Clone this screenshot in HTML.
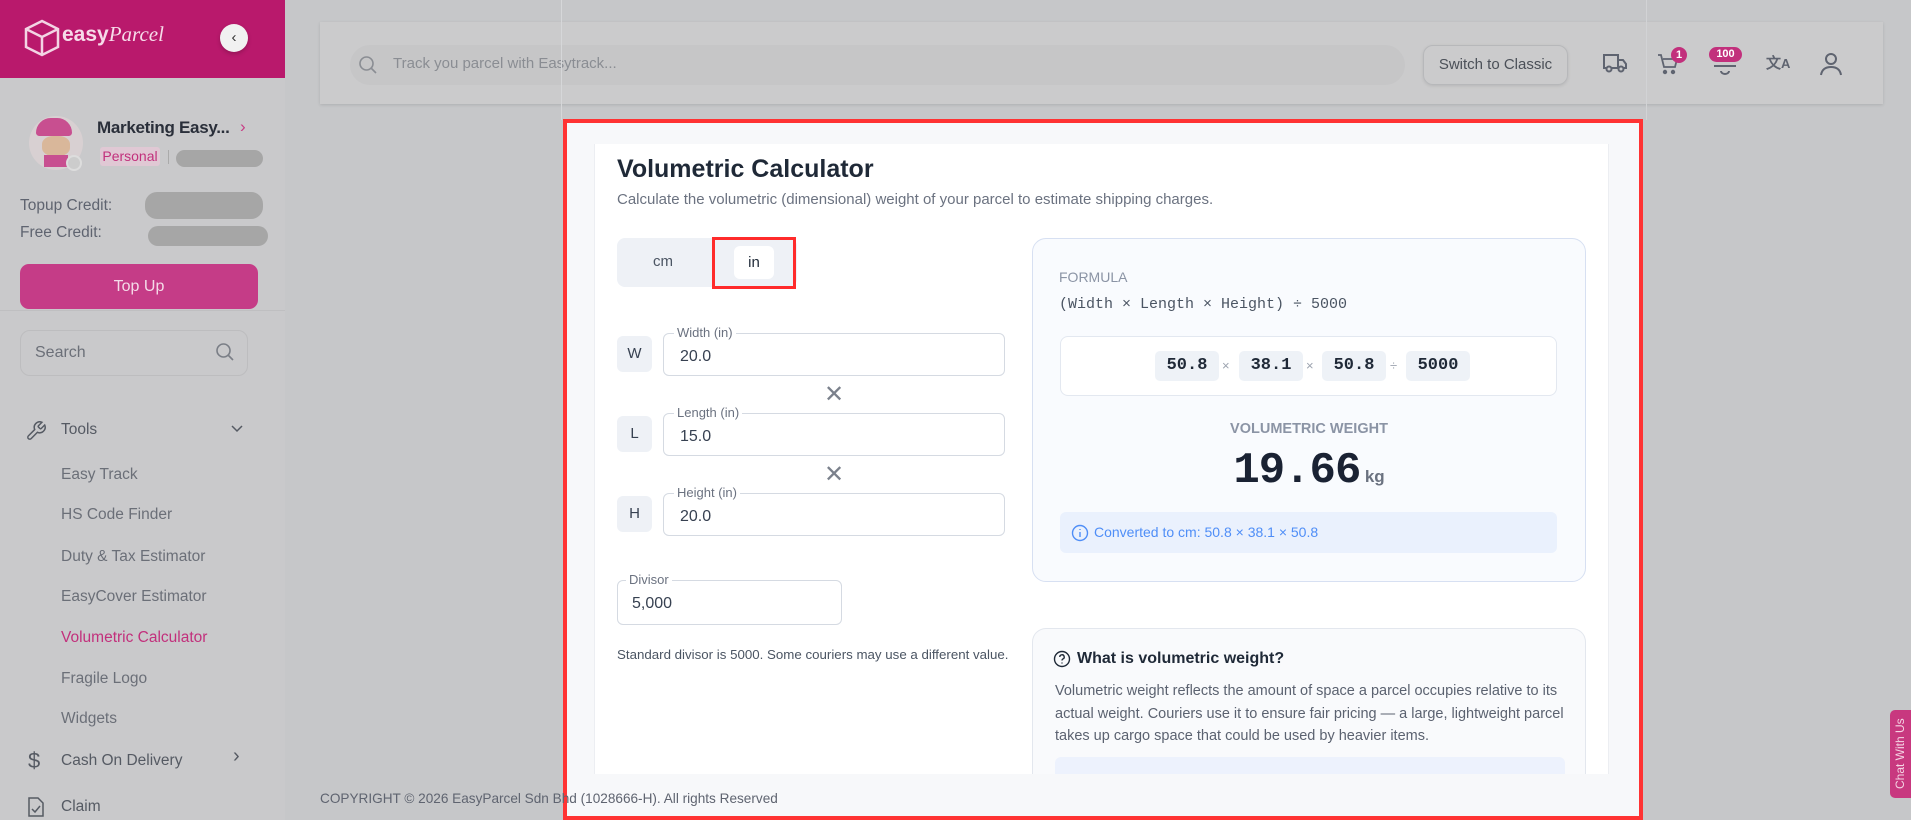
<!DOCTYPE html>
<html><head><meta charset="utf-8">
<style>
*{box-sizing:border-box;margin:0;padding:0}
body{width:1911px;height:820px;overflow:hidden;position:relative;font-family:"Liberation Sans",sans-serif;background:#c6c7c9;color:#374151}
.a{position:absolute}
.side{left:0;top:0;width:285px;height:820px;background:#c9c9cb}
.ph{left:0;top:0;width:285px;height:78px;background:#b9196c}
.mi{position:absolute;left:61px;font-size:15.5px;color:#6b6f78}
.mono{font-family:"Liberation Mono","DejaVu Sans Mono",monospace}
.fl{position:absolute;font-size:13px;color:#6b7280;background:#fff;padding:0 3px;top:-9px;left:10px;line-height:16px}
.inp{position:absolute;border:1px solid #d5dae2;border-radius:6px;background:#fff;font-size:16px;color:#374151}
.lb{position:absolute;left:617px;width:35px;height:36px;background:#eef1f6;border-radius:6px;font-size:15px;text-align:center;line-height:36px;color:#374151}
.chip{position:absolute;top:351px;height:30px;width:64px;background:#eef2f7;border-radius:5px;font-weight:bold;font-size:17px;color:#1f2937;text-align:center;line-height:30px}
.op{position:absolute;top:358px;font-size:13px;color:#9ca3af}
</style></head><body>
<!-- sidebar -->
<div class="a side"></div>
<div class="a ph"></div>
<svg class="a" style="left:22px;top:18px" width="40" height="40" viewBox="0 0 40 40" fill="none" stroke="#f3d4e4" stroke-width="2.5"><path d="M20 3 L36 11 V29 L20 37 L4 29 V11 Z M4 11 L20 19 L36 11 M20 19 V37"/></svg>
<div class="a" style="left:62px;top:22px;font-size:21px;font-weight:bold;color:#f6dbe9">easy<span style="font-family:'Liberation Serif',serif;font-style:italic;font-weight:normal;font-size:21px">Parcel</span></div>
<div class="a" style="left:220px;top:24px;width:28px;height:28px;border-radius:50%;background:#f1f1f1;box-shadow:0 2px 4px rgba(0,0,0,.2);text-align:center;line-height:27px;font-size:15px;color:#333">‹</div>
<div class="a" style="left:29px;top:116px;width:54px;height:54px;border-radius:50%;background:#d8d0d2"></div>
<div class="a" style="left:36px;top:118px;width:36px;height:18px;border-radius:18px 18px 4px 4px;background:#c84f90"></div>
<div class="a" style="left:42px;top:136px;width:28px;height:20px;border-radius:40%;background:#d9b79a"></div>
<div class="a" style="left:44px;top:155px;width:24px;height:12px;background:#c84f90"></div>
<div class="a" style="left:66px;top:155px;width:16px;height:16px;border-radius:50%;background:#ccc;border:2px solid #ddd"></div>
<div class="a" style="left:97px;top:118px;font-size:17px;font-weight:bold;color:#2a2f3a;letter-spacing:-0.3px">Marketing Easy...</div>
<div class="a" style="left:240px;top:117px;font-size:17px;color:#c73d85">›</div>
<div class="a" style="left:100px;top:147px;width:60px;height:19px;background:#e0c8d4;color:#c2307c;font-size:14px;text-align:center;line-height:19px;border-radius:3px">Personal</div>
<div class="a" style="left:168px;top:150px;width:1px;height:14px;background:#aaa"></div>
<div class="a" style="left:176px;top:150px;width:87px;height:17px;background:#a6a6a6;border-radius:9px"></div>
<div class="a" style="left:20px;top:197px;font-size:15.5px;color:#5f6470">Topup Credit:</div>
<div class="a" style="left:20px;top:224px;font-size:15.5px;color:#5f6470">Free Credit:</div>
<div class="a" style="left:145px;top:192px;width:118px;height:27px;background:#a6a6a6;border-radius:12px"></div>
<div class="a" style="left:148px;top:226px;width:120px;height:20px;background:#a6a6a6;border-radius:10px"></div>
<div class="a" style="left:20px;top:264px;width:238px;height:45px;background:#c53c87;border-radius:9px;color:#f4dbe8;font-size:16px;text-align:center;line-height:45px">Top Up</div>
<div class="a" style="left:0;top:310px;width:285px;height:1px;background:#bfbfc1"></div>
<div class="a" style="left:20px;top:330px;width:228px;height:46px;border:1px solid #bdbdbf;border-radius:10px;font-size:16px;color:#6b6f78;line-height:44px;padding-left:14px">Search</div>
<svg class="a" style="left:215px;top:342px" width="20" height="20" viewBox="0 0 20 20" fill="none" stroke="#7a7e86" stroke-width="1.6"><circle cx="8.5" cy="8.5" r="6.5"/><path d="M13.5 13.5 L18 18"/></svg>
<svg class="a" style="left:25px;top:420px" width="22" height="22" viewBox="0 0 24 24" fill="none" stroke="#555a63" stroke-width="1.6"><path d="M14.7 6.3a1 1 0 0 0 0 1.4l1.6 1.6a1 1 0 0 0 1.4 0l3.8-3.8a6 6 0 0 1-7.9 7.9l-6.9 6.9a2.1 2.1 0 0 1-3-3l6.9-6.9a6 6 0 0 1 7.9-7.9z"/></svg>
<div class="mi" style="top:421px;color:#555a63">Tools</div>
<svg class="a" style="left:230px;top:424px" width="14" height="10" viewBox="0 0 14 10" fill="none" stroke="#555a63" stroke-width="1.5"><path d="M2 2 L7 7 L12 2"/></svg>
<div class="mi" style="top:466px">Easy Track</div>
<div class="mi" style="top:506px">HS Code Finder</div>
<div class="mi" style="top:548px">Duty &amp; Tax Estimator</div>
<div class="mi" style="top:588px">EasyCover Estimator</div>
<div class="mi" style="top:629px;color:#c2307c">Volumetric Calculator</div>
<div class="mi" style="top:670px">Fragile Logo</div>
<div class="mi" style="top:710px">Widgets</div>
<div class="a" style="left:28px;top:748px;font-size:22px;color:#555a63">$</div>
<div class="mi" style="top:752px;color:#555a63">Cash On Delivery</div>
<div class="a" style="left:233px;top:745px;font-size:20px;color:#555a63">›</div>
<svg class="a" style="left:27px;top:796px" width="18" height="22" viewBox="0 0 18 22" fill="none" stroke="#555a63" stroke-width="1.5"><path d="M2 2h9l5 5v13H2z M5 13l3 3 5-6"/></svg>
<div class="mi" style="top:798px;color:#555a63">Claim</div>

<!-- top bar -->
<div class="a" style="left:320px;top:22px;width:1563px;height:82px;background:#cbcbcc;box-shadow:0 1px 3px rgba(0,0,0,.12)"></div>
<div class="a" style="left:350px;top:45px;width:1055px;height:40px;background:#c6c6c7;border-radius:20px"></div>
<svg class="a" style="left:358px;top:55px" width="20" height="20" viewBox="0 0 20 20" fill="none" stroke="#8a8d93" stroke-width="1.6"><circle cx="8.5" cy="8.5" r="6.5"/><path d="M13.5 13.5 L18 18"/></svg>
<div class="a" style="left:393px;top:55px;font-size:15px;color:#8a8d93">Track you parcel with Easytrack...</div>
<div class="a" style="left:1423px;top:45px;width:145px;height:40px;border:1px solid #b7b8ba;border-radius:10px;font-size:15px;color:#4b5058;text-align:center;line-height:38px;box-shadow:0 1px 3px rgba(0,0,0,.1)">Switch to Classic</div>
<svg class="a" style="left:1602px;top:52px" width="26" height="22" viewBox="0 0 26 22" fill="none" stroke="#5f6470" stroke-width="2"><path d="M2 3h14v13H2z M16 8h5l3 4v4h-8"/><circle cx="7" cy="17" r="2.5" fill="#cbcbcc"/><circle cx="19" cy="17" r="2.5" fill="#cbcbcc"/></svg>
<svg class="a" style="left:1656px;top:52px" width="24" height="24" viewBox="0 0 24 24" fill="none" stroke="#5f6470" stroke-width="1.8"><path d="M2 3h3l3 12h11l2-8H7"/><circle cx="9" cy="20" r="1.3" fill="#5f6470"/><circle cx="17" cy="20" r="1.3" fill="#5f6470"/></svg>
<div class="a" style="left:1671px;top:47px;width:16px;height:16px;border-radius:50%;background:#c2307c;color:#fff;font-size:11px;font-weight:bold;text-align:center;line-height:16px">1</div>
<svg class="a" style="left:1712px;top:60px" width="26" height="16" viewBox="0 0 26 16" fill="none" stroke="#5f6470" stroke-width="2"><path d="M2 6h22 M9 11a4 3 0 0 0 8 0"/></svg>
<div class="a" style="left:1709px;top:47px;width:33px;height:15px;border-radius:8px;background:#c2307c;color:#fff;font-size:11px;font-weight:bold;text-align:center;line-height:15px">100</div>
<div class="a" style="left:1766px;top:52px;font-size:15px;color:#5f6470;font-weight:bold">文<span style="font-size:13px">A</span></div>
<svg class="a" style="left:1818px;top:51px" width="26" height="26" viewBox="0 0 26 26" fill="none" stroke="#5f6470" stroke-width="2"><circle cx="13" cy="8" r="5"/><path d="M3 24c1-6 5-8 10-8s9 2 10 8"/></svg>

<div class="a" style="left:561px;top:0;width:1px;height:120px;background:#d6d7d9"></div>
<div class="a" style="left:1646px;top:0;width:1px;height:120px;background:#d2d3d5"></div>

<!-- highlight box -->
<div class="a" style="left:563px;top:119px;width:1080px;height:701px;background:#f7f8fa;border:4px solid #ff3333"></div>
<div class="a" style="left:594px;top:144px;width:1015px;height:630px;background:#fff;border-left:1px solid #eceef2;border-right:1px solid #eceef2"></div>

<div class="a" style="left:617px;top:155px;font-size:25px;font-weight:bold;color:#1f2937">Volumetric Calculator</div>
<div class="a" style="left:617px;top:191px;font-size:15px;color:#6b7280">Calculate the volumetric (dimensional) weight of your parcel to estimate shipping charges.</div>

<div class="a" style="left:617px;top:238px;width:180px;height:49px;background:#eef1f6;border-radius:8px"></div>
<div class="a" style="left:653px;top:253px;font-size:15px;color:#4b5563">cm</div>
<div class="a" style="left:734px;top:246px;width:40px;height:33px;background:#fff;border-radius:6px;font-size:15px;color:#1f2937;text-align:center;line-height:33px">in</div>
<div class="a" style="left:712px;top:237px;width:84px;height:52px;border:3px solid #ff2b2b"></div>

<div class="lb" style="top:336px">W</div>
<div class="inp" style="left:663px;top:333px;width:342px;height:43px;padding:14px 0 0 16px">20.0<span class="fl">Width (in)</span></div>
<div class="a" style="left:824px;top:380px;font-size:24px;color:#7b818c;font-weight:300">✕</div>
<div class="lb" style="top:416px">L</div>
<div class="inp" style="left:663px;top:413px;width:342px;height:43px;padding:14px 0 0 16px">15.0<span class="fl">Length (in)</span></div>
<div class="a" style="left:824px;top:460px;font-size:24px;color:#7b818c">✕</div>
<div class="lb" style="top:496px">H</div>
<div class="inp" style="left:663px;top:493px;width:342px;height:43px;padding:14px 0 0 16px">20.0<span class="fl">Height (in)</span></div>

<div class="inp" style="left:617px;top:580px;width:225px;height:45px;padding:14px 0 0 14px">5,000<span class="fl" style="left:8px">Divisor</span></div>
<div class="a" style="left:617px;top:647px;font-size:13.3px;color:#4b5563">Standard divisor is 5000. Some couriers may use a different value.</div>

<!-- formula panel -->
<div class="a" style="left:1032px;top:238px;width:554px;height:344px;background:#f9fbfe;border:1px solid #d7e0f2;border-radius:14px"></div>
<div class="a" style="left:1059px;top:269px;font-size:14px;color:#8b94a5">FORMULA</div>
<div class="a mono" style="left:1059px;top:296px;font-size:15px;color:#4b5563">(Width × Length × Height) ÷ 5000</div>
<div class="a" style="left:1060px;top:336px;width:497px;height:60px;background:#fff;border:1px solid #e3e8f0;border-radius:8px"></div>
<div class="chip mono" style="left:1155px">50.8</div>
<div class="op" style="left:1222px">×</div>
<div class="chip mono" style="left:1239px">38.1</div>
<div class="op" style="left:1306px">×</div>
<div class="chip mono" style="left:1322px">50.8</div>
<div class="op" style="left:1390px">÷</div>
<div class="chip mono" style="left:1406px">5000</div>
<div class="a" style="left:1032px;top:421px;width:554px;text-align:center;font-size:14.5px;color:#8b94a5;font-weight:bold">VOLUMETRIC WEIGHT</div>
<div class="a" style="left:1032px;top:446px;width:554px;text-align:center;color:#1a2233"><span class="mono" style="font-size:44px;font-weight:bold;letter-spacing:-1px">19.66</span> <span style="font-size:17px;font-weight:bold;color:#6b7280">kg</span></div>
<div class="a" style="left:1060px;top:512px;width:497px;height:41px;background:#eaf1fd;border-radius:6px"></div>
<svg class="a" style="left:1071px;top:524px" width="18" height="18" viewBox="0 0 18 18" fill="none" stroke="#4f8ef7" stroke-width="1.4"><circle cx="9" cy="9" r="7.5"/><path d="M9 8v5 M9 5v1"/></svg>
<div class="a" style="left:1094px;top:524px;font-size:14px;color:#4f8ef7">Converted to cm: 50.8 × 38.1 × 50.8</div>

<!-- info panel -->
<div class="a" style="left:1032px;top:628px;width:554px;height:146px;background:#f9fafc;border:1px solid #e3e7ee;border-bottom:none;border-radius:14px 14px 0 0;overflow:hidden">
<div style="position:absolute;left:22px;top:128px;width:510px;height:30px;background:#edf2fd;border-radius:6px"></div>
</div>
<svg class="a" style="left:1053px;top:650px" width="18" height="18" viewBox="0 0 18 18" fill="none" stroke="#1f2937" stroke-width="1.4"><circle cx="9" cy="9" r="7.5"/><path d="M6.8 7a2.2 2.2 0 1 1 3 2c-.6.3-.8.7-.8 1.5 M9 12.5v1"/></svg>
<div class="a" style="left:1077px;top:650px;font-size:16px;font-weight:bold;color:#1f2937">What is volumetric weight?</div>
<div class="a" style="left:1055px;top:680px;width:520px;font-size:14.5px;line-height:22.5px;color:#5b6270">Volumetric weight reflects the amount of space a parcel occupies relative to its actual weight. Couriers use it to ensure fair pricing — a large, lightweight parcel takes up cargo space that could be used by heavier items.</div>

<div class="a" style="left:320px;top:791px;font-size:13.6px;color:#5f6470">COPYRIGHT © 2026 EasyParcel Sdn Bhd (1028666-H). All rights Reserved</div>

<div class="a" style="left:1890px;top:710px;width:24px;height:88px;background:#c8387f;border-radius:5px 0 0 5px"></div>
<div class="a" style="left:1890px;top:710px;width:21px;height:88px;color:#f4d4e4;font-size:12px;writing-mode:vertical-rl;transform:rotate(180deg);text-align:center;line-height:21px">Chat With Us</div>
</body></html>
